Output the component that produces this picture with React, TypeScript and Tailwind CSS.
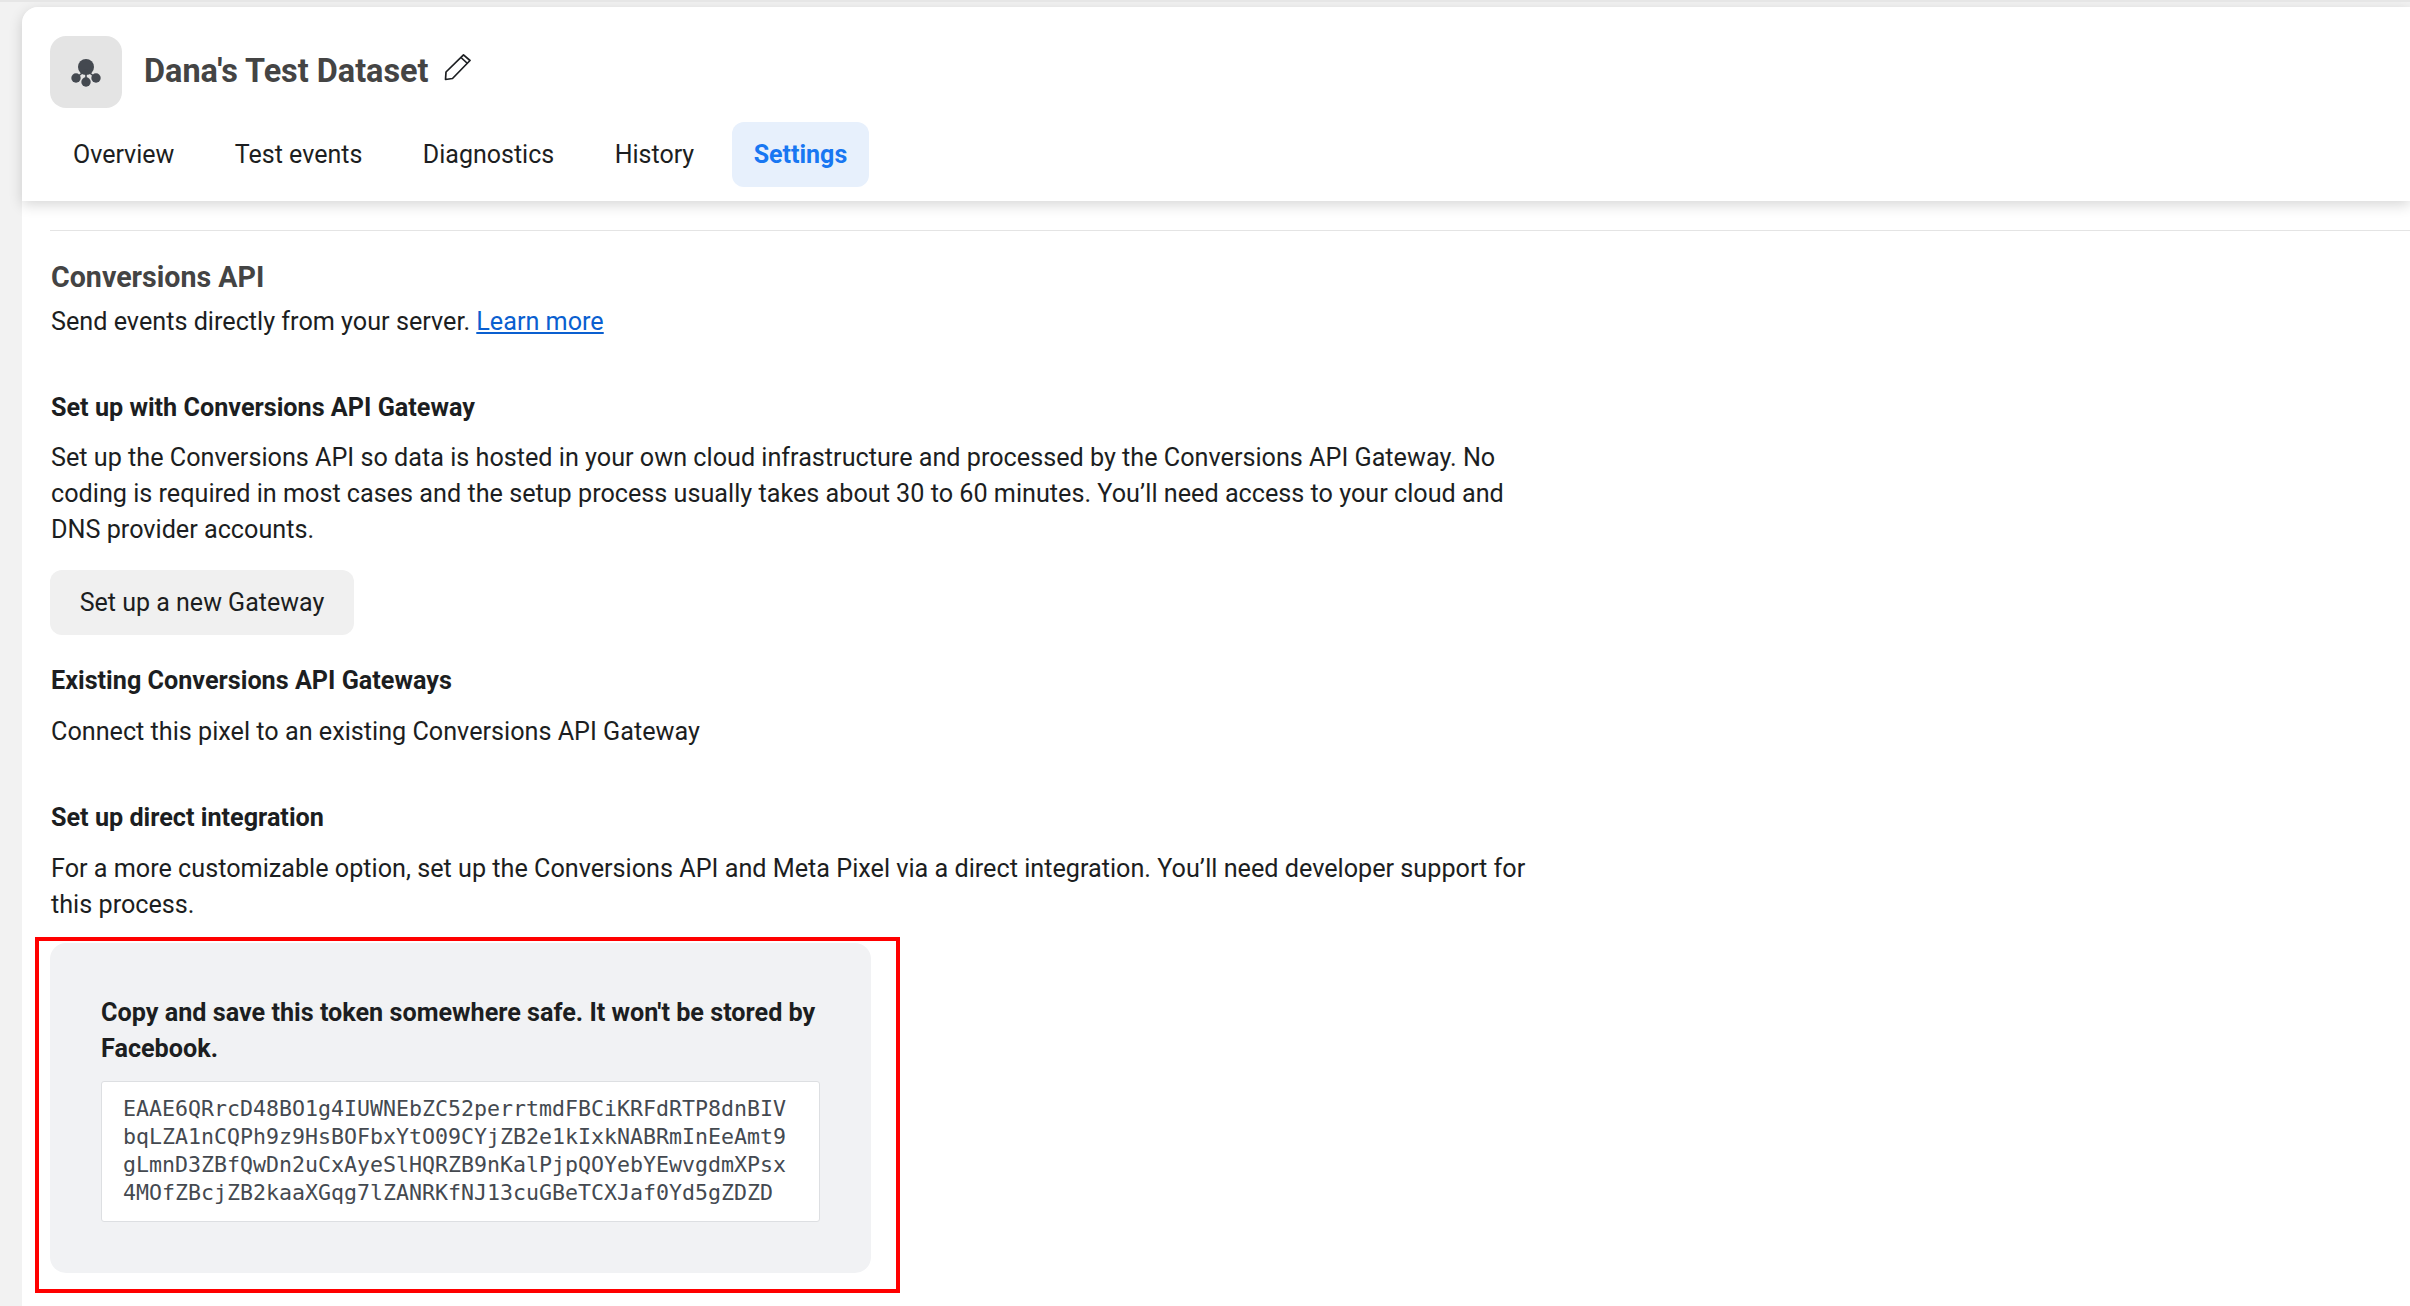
const tabs = ['Overview', 'Test events', 'Diagnostics', 'History'];

const tokenLines = [
  'EAAE6QRrcD48BO1g4IUWNEbZC52perrtmdFBCiKRFdRTP8dnBIV',
  'bqLZA1nCQPh9z9HsBOFbxYtO09CYjZB2e1kIxkNABRmInEeAmt9',
  'gLmnD3ZBfQwDn2uCxAyeSlHQRZB9nKalPjpQOYebYEwvgdmXPsx',
  '4MOfZBcjZB2kaaXGqg7lZANRKfNJ13cuGBeTCXJaf0Yd5gZDZD',
];

export default function App() {
  return (
    <div className="h-screen overflow-hidden bg-[#f2f2f2] border-t-2 border-[#e6e6e6] pt-[5px] pl-[22px] font-['Roboto',sans-serif] text-[25.2px] leading-[36px] text-[#1c1e21]">
      <div className="h-full bg-white rounded-tl-2xl">
        {/* Page header */}
        <header className="relative z-10 h-[194px] pt-[29px] pl-[28px] bg-white rounded-tl-2xl shadow-[0_4px_14px_rgba(0,0,0,0.16)]">
          <div className="flex items-center">
            <div className="w-[72px] h-[72px] rounded-2xl bg-[#e4e4e4] flex items-center justify-center">
              <svg width="32" height="32" viewBox="0 0 32 32" fill="#444950">
                <circle cx="16" cy="11" r="8" />
                <circle cx="6" cy="22" r="4.7" />
                <circle cx="16" cy="26" r="4.7" />
                <circle cx="26" cy="22" r="4.7" />
                <path d="M6 22 16 14l10 8M16 14v12" stroke="#444950" strokeWidth="1.6" fill="none" />
              </svg>
            </div>
            <h1 className="ml-[22px] mb-[2px] text-[32.4px] leading-[40px] font-bold text-[#444444]">Dana's Test Dataset</h1>
            <svg className="ml-[15px] mb-[10px]" width="27" height="28" viewBox="0 0 27 28" fill="none" stroke="#1c1e21" strokeWidth="1.7" strokeLinejoin="round">
              <path d="M1.5 26.5 2 19 19.5 1.8 26 7.5 8.5 25.5Z" />
              <path d="M17 4.5 23.5 10.5" />
            </svg>
          </div>
          <nav className="flex items-center gap-[14.5px] mt-[14px]">
            {tabs.map((t) => (
              <div key={t} className="h-[65px] px-[23px] flex items-center text-[25px]">{t}</div>
            ))}
            <div className="h-[65px] px-[22px] flex items-center text-[25px] font-bold rounded-xl bg-[#e7f0fc] text-[#1877f2]">Settings</div>
          </nav>
        </header>

        <main className="pl-[28px]">
          <div className="mt-[29px] h-px bg-[#e4e4e4]" />
          <h2 className="mt-[28px] ml-px text-[28.6px] font-bold text-[#444444]">Conversions API</h2>
          <p className="mt-[9px] ml-px">
            Send events directly from your server. <a className="text-[#0a5fd0] underline">Learn more</a>
          </p>

          <h3 className="mt-[50px] ml-px text-[25.2px] font-bold">Set up with Conversions API Gateway</h3>
          <p className="mt-[14px] ml-px w-[1490px]">
            Set up the Conversions API so data is hosted in your own cloud infrastructure and processed by the Conversions API Gateway. No coding is required in most cases and the setup process usually takes about 30 to 60 minutes. You’ll need access to your cloud and DNS provider accounts.
          </p>
          <button className="mt-[22px] h-[65px] w-[304px] rounded-xl bg-[#f0f0f0] text-[25px] block">Set up a new Gateway</button>

          <h3 className="mt-[28px] ml-px text-[25.2px] font-bold">Existing Conversions API Gateways</h3>
          <p className="mt-[15px] ml-px">Connect this pixel to an existing Conversions API Gateway</p>

          <h3 className="mt-[50px] ml-px text-[25.2px] font-bold">Set up direct integration</h3>
          <p className="mt-[15px] ml-px w-[1490px]">
            For a more customizable option, set up the Conversions API and Meta Pixel via a direct integration. You’ll need developer support for this process.
          </p>

          {/* Token panel with the red annotation frame over it */}
          <div className="relative mt-[20px] w-[821px] h-[330px] rounded-2xl bg-[#f1f2f4] pt-[52px] px-[51px]">
            <div className="font-bold">Copy and save this token somewhere safe. It won't be stored by Facebook.</div>
            <div className="mt-[14px] h-[141px] bg-white border border-[#dddfe2] rounded-[3px] py-[13px] px-[21px] font-['DejaVu_Sans_Mono',monospace] text-[21.6px] leading-[28px] text-[#444950]">
              {tokenLines.map((l) => (
                <div key={l} className="whitespace-pre">{l}</div>
              ))}
            </div>
            <div className="absolute -left-[15px] -top-[6px] -right-[29px] -bottom-[20px] border-4 border-[#ff0000]" />
          </div>
        </main>
      </div>
    </div>
  );
}
